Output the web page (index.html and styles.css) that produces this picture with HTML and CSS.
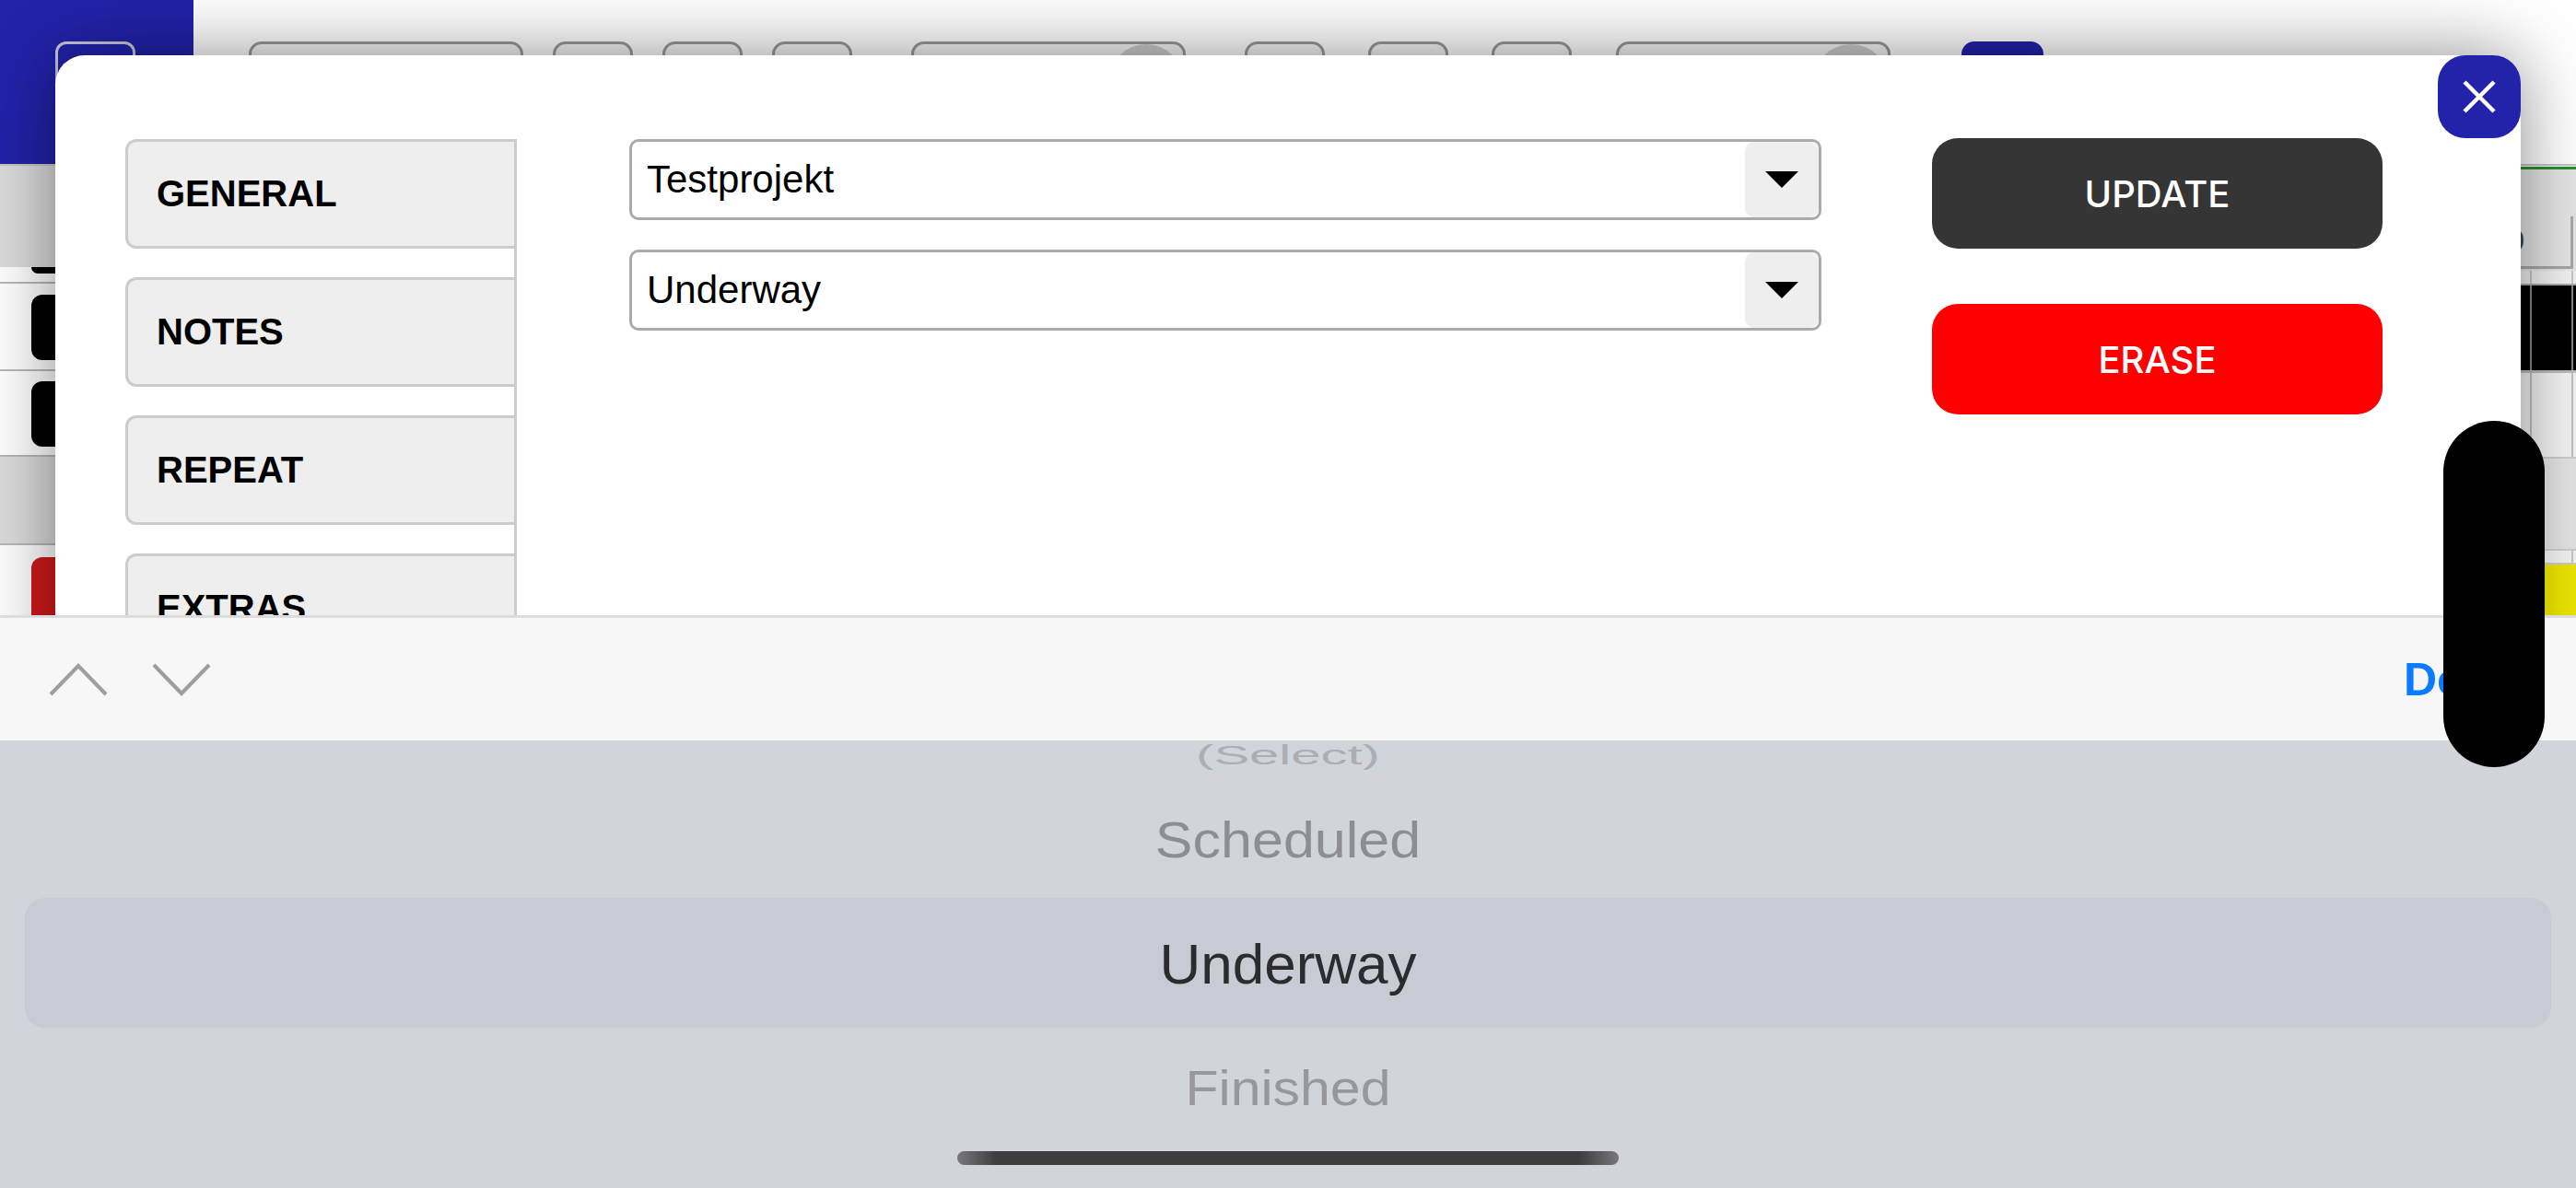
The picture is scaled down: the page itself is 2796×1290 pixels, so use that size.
FILE: index.html
```html
<!DOCTYPE html>
<html lang="en">
<head>
<meta charset="utf-8">
<title>Task editor</title>
<link rel="stylesheet" href="styles.css">
</head>
<body>
<div class="app">
  <header class="topbar">
    <div class="logo"><span class="logo-btn"></span></div>
    <nav class="toolbar">
      <div class="tgroup g1">
        <span class="tbtn wide"></span>
        <span class="tbtn"></span>
        <span class="tbtn"></span>
        <span class="tbtn"></span>
      </div>
      <div class="tgroup g2"><span class="tbtn wide toggle"><span class="knob"></span></span></div>
      <div class="tgroup g3">
        <span class="tbtn"></span>
        <span class="tbtn"></span>
        <span class="tbtn"></span>
      </div>
      <div class="tgroup g4"><span class="tbtn wide toggle"><span class="knob"></span></span></div>
      <div class="tgroup g5"><span class="tbtn blue"></span></div>
    </nav>
  </header>
  <div class="content">
    <aside class="side">
      <div class="s-head"></div>
      <div class="s-row s-short"><span class="s-tail"></span></div>
      <div class="s-row s-tall"><span class="s-block"></span></div>
      <div class="s-row s-tall2"><span class="s-block"></span></div>
      <div class="s-gray"></div>
      <div class="s-row s-last"><span class="s-block red"></span></div>
    </aside>
    <main class="sheet"></main>
    <section class="table">
      <div class="t-head"><div class="t-input">10</div></div>
      <div class="t-row thin"><span class="c"></span><span class="c"></span><span class="c"></span></div>
      <div class="t-row dark"><span class="c"></span><span class="c"></span><span class="c"></span></div>
      <div class="t-row light"><span class="c"></span><span class="c"></span><span class="c"></span></div>
      <div class="t-gray"></div>
      <div class="t-row thin2"><span class="c"></span><span class="c"></span><span class="c"></span></div>
      <div class="t-yellow"></div>
    </section>
  </div>
</div>

<div class="modal">
  <button class="close" aria-label="Close">
    <svg width="36" height="36" viewBox="0 0 36 36"><path d="M2 2 L34 34 M34 2 L2 34" stroke="#fff" stroke-width="4.5" fill="none"/></svg>
  </button>
  <div class="tabs">
    <div class="tab">GENERAL</div>
    <div class="tab">NOTES</div>
    <div class="tab">REPEAT</div>
    <div class="tab">EXTRAS</div>
  </div>
  <div class="fields">
    <div class="select"><span class="value">Testprojekt</span><span class="arrow-box"><span class="arrow"></span></span></div>
    <div class="select"><span class="value">Underway</span><span class="arrow-box"><span class="arrow"></span></span></div>
  </div>
  <div class="actions">
    <div class="btn update">UPDATE</div>
    <div class="btn erase">ERASE</div>
  </div>
</div>

<div class="keyboard">
  <div class="accessory">
    <div class="nav-arrows">
      <svg width="64" height="36" viewBox="0 0 64 36"><path d="M2 34 L32 3 L62 34" stroke="#9e9e9e" stroke-width="4" fill="none"/></svg>
      <svg width="64" height="36" viewBox="0 0 64 36"><path d="M2 2 L32 33 L62 2" stroke="#9e9e9e" stroke-width="4" fill="none"/></svg>
    </div>
    <span class="done">Done</span>
  </div>
  <div class="picker">
    <div class="p-row p-faint"><span>(Select)</span></div>
    <div class="p-row p-near p-above"><span>Scheduled</span></div>
    <div class="p-row p-sel"><span>Underway</span></div>
    <div class="p-row p-near p-below"><span>Finished</span></div>
    <div class="home-indicator"></div>
  </div>
</div>

<div class="pill"></div>
</body>
</html>
```

FILE: styles.css
```css
* { box-sizing: border-box; }
html, body {
  margin: 0;
  padding: 0;
  width: 2796px;
  height: 1290px;
  overflow: hidden;
  background: #fff;
  font-family: "Liberation Sans", Arial, sans-serif;
}

/* ---------- background app ---------- */
.app { width: 2796px; height: 1290px; display: flex; flex-direction: column; }

.topbar {
  height: 180px;
  display: flex;
  border-bottom: 2px solid #c4c4c4;
  background: #fff;
  flex: none;
}
.logo {
  width: 210px;
  background: #2222aa;
  padding: 45px 0 0 60px;
}
.logo-btn {
  display: block;
  width: 87px;
  height: 90px;
  border: 3px solid #c9c9dc;
  border-radius: 12px;
}
.toolbar {
  display: flex;
  align-items: flex-start;
  padding: 45px 0 0 60px;
}
.tgroup { display: flex; gap: 32px; }
.g2 { margin-left: 64px; }
.g3 { margin-left: 64px; gap: 47px; }
.g4 { margin-left: 48px; }
.g5 { margin-left: 77px; }
.tbtn {
  display: block;
  width: 87px;
  height: 90px;
  border: 3px solid #999;
  border-radius: 14px;
  background: linear-gradient(#f6f6f6, #dadada);
}
.tbtn.wide { width: 298px; }
.tbtn.toggle { position: relative; }
.knob {
  position: absolute;
  right: 0;
  top: 0;
  width: 80px;
  height: 80px;
  border-radius: 50%;
  background: #cbcbcb;
}
.tbtn.blue { width: 89px; background: #2222aa; border-color: #2222aa; }

.content { flex: 1; display: flex; }
.side { width: 210px; display: flex; flex-direction: column; }
.s-head { height: 110px; background: #dcdcdc; }
.s-row { background: #fff; border-bottom: 2px solid #b8b8b8; padding-left: 34px; }
.s-short { height: 18px; }
.s-tail {
  display: block;
  height: 7px;
  background: #000;
  border-radius: 0 0 12px 12px;
}
.s-tall { height: 95px; padding-top: 12px; }
.s-tall2 { height: 93px; padding-top: 11px; }
.s-block {
  display: block;
  height: 71px;
  background: #000;
  border-radius: 12px;
}
.s-gray { height: 96px; background: #dcdcdc; border-bottom: 2px solid #b8b8b8; }
.s-last { flex: 1; border: 0; padding-top: 13px; }
.s-block.red { height: 90px; background: #d01a1a; }

.sheet { flex: 1; background: #fff; }

.table { width: 200px; display: flex; flex-direction: column; }
.t-head {
  height: 113px;
  margin-top: 1px;
  border-top: 3px solid #2a8f2a;
  background: #e6e6e6;
  display: flex;
  align-items: flex-end;
  padding-bottom: 2px;
}
.t-input {
  width: 197px;
  height: 57px;
  border-right: 3px solid #a8a8a8;
  border-bottom: 3px solid #a8a8a8;
  text-align: right;
  padding-right: 50px;
  font-size: 32px;
  line-height: 52px;
  color: #444;
}
.t-row {
  display: grid;
  grid-template-columns: 150px 43px 1fr;
  column-gap: 2px;
}
.t-row.thin { height: 16px; background: #c8c8c8; border-bottom: 2px solid #aaa; }
.t-row.thin .c { background: #f3f3f3; }
.t-row.dark { height: 95px; background: #888; border-bottom: 3px solid #bbb; }
.t-row.dark .c { background: #000; }
.t-row.light { height: 91px; background: #c0c0c0; }
.t-row.light .c { background: #f4f4f4; }
.t-gray { height: 100px; background: #e4e4e4; border-top: 2px solid #ccc; }
.t-row.thin2 { height: 17px; background: #c8c8c8; border-top: 2px solid #ccc; border-bottom: 2px solid #ccc; }
.t-row.thin2 .c { background: #f3f3f3; }
.t-yellow { flex: 1; background: #ece600; }

/* ---------- modal ---------- */
.modal {
  position: absolute;
  left: 60px;
  top: 60px;
  width: 2676px;
  height: 760px;
  background: #fff;
  border-radius: 32px;
  box-shadow: 0 0 80px rgba(0, 0, 0, 0.45);
  padding: 91px 0 0 76px;
  display: flex;
  align-items: flex-start;
  z-index: 5;
}
.close {
  position: absolute;
  top: 0;
  right: 0;
  width: 90px;
  height: 90px;
  border: 0;
  padding: 0;
  border-radius: 30px;
  background: #2222aa;
  display: flex;
  align-items: center;
  justify-content: center;
}
.close svg { display: block; }

.tabs {
  width: 425px;
  margin-right: 122px;
  border-right: 3px solid #cccccc;
  display: flex;
  flex-direction: column;
  gap: 31px;
  padding-bottom: 100px;
}
.tab {
  height: 119px;
  background: #eeeeee;
  border: 3px solid #cccccc;
  border-right: 0;
  border-radius: 12px 0 0 12px;
  display: flex;
  align-items: center;
  padding-left: 31px;
  font-weight: 700;
  font-size: 40px;
  color: #000;
}

.fields {
  width: 1294px;
  margin-right: 120px;
  display: flex;
  flex-direction: column;
  gap: 32px;
}
.select {
  height: 88px;
  border: 3px solid #aaaaaa;
  border-radius: 10px;
  display: flex;
  align-items: center;
  padding-left: 16px;
  background: #fff;
}
.select .value { flex: 1; font-size: 42px; color: #000; }
.arrow-box {
  align-self: stretch;
  width: 80px;
  background: #eeeeee;
  border-radius: 10px;
  display: flex;
  align-items: center;
  justify-content: center;
}
.arrow {
  width: 0;
  height: 0;
  border-left: 18px solid transparent;
  border-right: 18px solid transparent;
  border-top: 18px solid #000;
}

.actions {
  width: 489px;
  margin-top: -1px;
  display: flex;
  flex-direction: column;
  gap: 60px;
}
.btn {
  height: 120px;
  border-radius: 28px;
  display: flex;
  align-items: center;
  justify-content: center;
  color: #fff;
  font-family: Inter, "Liberation Sans", sans-serif;
  font-weight: 500;
  font-size: 40px;
}
.update { background: #353535; }
.erase { background: #ff0000; }

/* ---------- keyboard / picker ---------- */
.keyboard {
  position: fixed;
  left: 0;
  bottom: 0;
  width: 2796px;
  height: 622px;
  display: flex;
  flex-direction: column;
  z-index: 10;
}
.accessory {
  height: 136px;
  border-top: 3px solid #dcdcdc;
  background: #f7f7f7;
  display: flex;
  align-items: center;
  padding: 0 62px 0 53px;
}
.nav-arrows { display: flex; gap: 48px; }
.nav-arrows svg { display: block; }
.done {
  margin-left: auto;
  color: #0a7cff;
  font-weight: 700;
  font-size: 50px;
}
.picker {
  flex: 1;
  background: #d1d4db;
  display: flex;
  flex-direction: column;
}
.p-row {
  display: flex;
  align-items: center;
  justify-content: center;
  line-height: 1;
}
.p-row span { display: block; }
.p-faint { height: 32px; overflow: hidden; }
.p-faint span { font-size: 58px; color: #adadb2; transform: scaleY(0.5); }
.p-above { height: 139px; padding-top: 13px; }
.p-near span { font-size: 61px; color: #8d8d92; transform: scaleY(0.92); }
.p-below { height: 132px; }
.p-below span { font-size: 59px; color: #98989c; }
.p-sel {
  height: 141px;
  margin: 0 27px;
  border-radius: 22px;
  background: #c8cbd3;
  padding-top: 3px;
}
.p-sel span { font-size: 62px; color: #2c2c2e; }
.home-indicator {
  align-self: center;
  margin-top: 2px;
  width: 718px;
  height: 15px;
  border-radius: 8px;
  background: linear-gradient(90deg, #77777c, #3d3d41 6%, #3d3d41 94%, #77777c);
}

.pill {
  position: fixed;
  left: 2652px;
  top: 457px;
  width: 110px;
  height: 376px;
  border-radius: 55px;
  background: #000;
  z-index: 20;
}
```
